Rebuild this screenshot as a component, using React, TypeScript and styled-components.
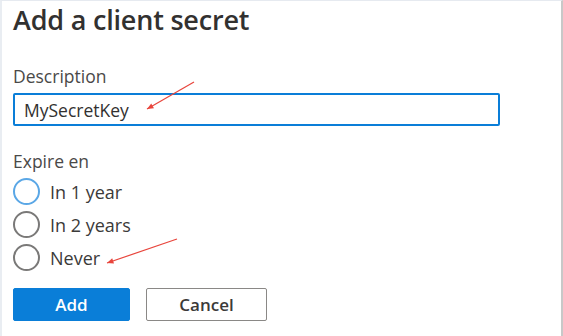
import React from "react";
import styled, { createGlobalStyle } from "styled-components";

const GlobalStyle = createGlobalStyle`
  html, body {
    margin: 0;
    padding: 0;
    background: #ffffff;
  }
  body {
    font-family: "Open Sans", "Noto Sans", sans-serif;
    color: #323130;
  }
`;

const Frame = styled.div`
  position: relative;
  width: 563px;
  height: 336px;
  box-sizing: border-box;
  border-top: 1px solid #e6eaf0;
  border-left: 2px solid #e9edf2;
  border-right: 2px solid #c8c8c8;
  padding: 0 0 0 11px;
  overflow: hidden;
`;

const Title = styled.h1`
  margin: 0;
  padding-top: 1px;
  font-size: 27px;
  line-height: 36px;
  font-weight: 600;
  color: #323130;
  letter-spacing: -0.2px;
`;

const Label = styled.div`
  font-size: 17.5px;
  line-height: 22px;
  color: #4a4948;
`;

const DescriptionLabel = styled(Label)`
  margin-top: 27px;
`;

const Input = styled.div`
  margin-top: 6px;
  width: 487px;
  height: 33px;
  box-sizing: border-box;
  border: 2px solid #0a7ed8;
  border-radius: 2px;
  padding: 0 9px;
  display: flex;
  align-items: center;
  font-size: 17.5px;
  color: #323130;
`;

const ExpireLabel = styled(Label)`
  margin-top: 24px;
`;

const RadioGroup = styled.div`
  display: flex;
  flex-direction: column;
  gap: 6px;
  margin-top: 6px;
`;

const RadioRow = styled.div`
  display: flex;
  align-items: center;
  gap: 10px;
  height: 27px;
  font-size: 18px;
  color: #3b3a39;
`;

const Circle = styled.span<{ $focused?: boolean }>`
  width: 27px;
  height: 27px;
  box-sizing: border-box;
  border-radius: 50%;
  border: 2px solid ${(p) => (p.$focused ? "#5aa7e6" : "#7a7978")};
  flex: 0 0 auto;
`;

const Actions = styled.div`
  display: flex;
  gap: 16px;
  margin-top: 17px;
`;

const Button = styled.button<{ $primary?: boolean }>`
  width: ${(p) => (p.$primary ? "117px" : "121px")};
  height: 33px;
  box-sizing: border-box;
  border-radius: 2px;
  font-family: "Open Sans", "Noto Sans", sans-serif;
  font-size: 17px;
  font-weight: 600;
  cursor: pointer;
  background: ${(p) => (p.$primary ? "#0a7ed8" : "#ffffff")};
  color: ${(p) => (p.$primary ? "#ffffff" : "#3b3a39")};
  border: 1px solid ${(p) => (p.$primary ? "#0a7ed8" : "#8a8886")};
`;

const Annotations = styled.svg`
  position: absolute;
  left: 0;
  top: 0;
  pointer-events: none;
`;

const Arrow = ({ x1, y1, x2, y2 }: { x1: number; y1: number; x2: number; y2: number }) => {
  const angle = Math.atan2(y2 - y1, x2 - x1);
  const len = 7;
  const spread = 0.4;
  const ax = x2 - len * Math.cos(angle - spread);
  const ay = y2 - len * Math.sin(angle - spread);
  const bx = x2 - len * Math.cos(angle + spread);
  const by = y2 - len * Math.sin(angle + spread);
  return (
    <g>
      <line x1={x1} y1={y1} x2={x2} y2={y2} stroke="#e8453c" strokeWidth={1.2} />
      <polygon points={`${x2},${y2} ${ax},${ay} ${bx},${by}`} fill="#e8453c" />
    </g>
  );
};

export default function App() {
  return (
    <>
      <GlobalStyle />
      <Frame>
        <Title>Add a client secret</Title>
        <DescriptionLabel>Description</DescriptionLabel>
        <Input>MySecretKey</Input>
        <ExpireLabel>Expire en</ExpireLabel>
        <RadioGroup>
          <RadioRow>
            <Circle $focused />
            In 1 year
          </RadioRow>
          <RadioRow>
            <Circle />
            In 2 years
          </RadioRow>
          <RadioRow>
            <Circle />
            Never
          </RadioRow>
        </RadioGroup>
        <Actions>
          <Button $primary>Add</Button>
          <Button>Cancel</Button>
        </Actions>
        <Annotations width={563} height={336}>
          <Arrow x1={192} y1={81} x2={145} y2={108} />
          <Arrow x1={175} y1={238} x2={105} y2={262} />
        </Annotations>
      </Frame>
    </>
  );
}
